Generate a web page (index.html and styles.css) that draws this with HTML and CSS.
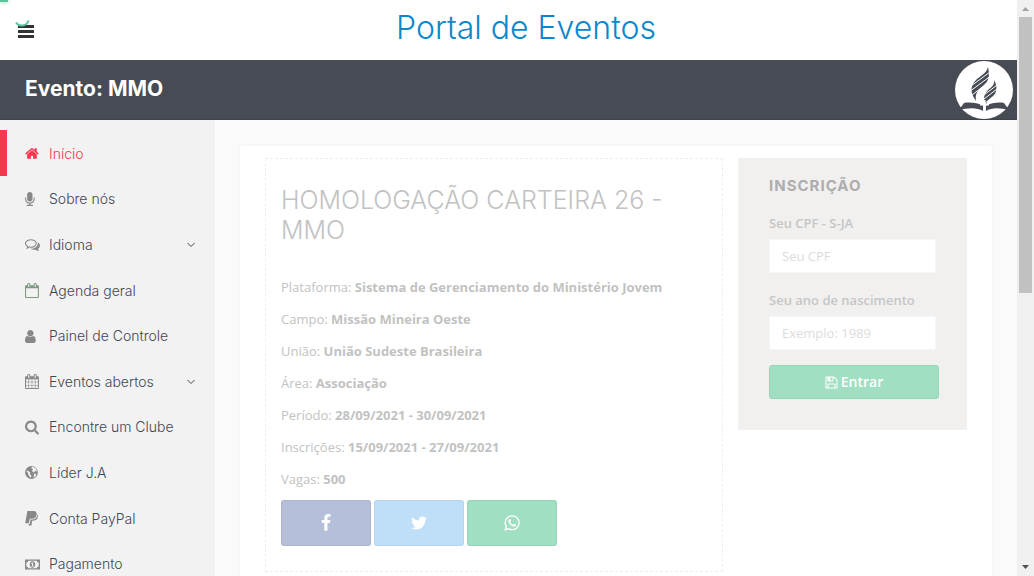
FILE: index.html
```html
<!DOCTYPE html>
<html lang="pt-BR">
<head>
<meta charset="utf-8">
<meta name="viewport" content="width=device-width, initial-scale=1">
<title>Portal de Eventos</title>
<link rel="stylesheet" href="styles.css">
</head>
<body>
<div class="window">
  <div class="page">
    <div class="progress"></div>
    <svg class="spinner" viewBox="0 0 18 18" aria-hidden="true"><path d="M2 10.500A7 7 0 0 0 14.500 8.500"/></svg>
    <header class="topbar">
      <button class="menu-toggle" type="button" aria-label="Menu">
        <svg viewBox="0 0 16 14"><path d="M0 1.500h16M0 6.500h16M0 11.500h16"/></svg>
      </button>
      <h1 class="brand"><a href="#">Portal de Eventos</a></h1>
    </header>
    <div class="event-bar">
      <h2 class="event-name">Evento: MMO</h2>
      <svg class="emblem" viewBox="0 0 58 58" role="img" aria-label="Igreja Adventista">
        <circle cx="29" cy="29" r="29" fill="#fff"/>
        <g fill="#474b54">
          <path d="M9 42C15 41 23 42 28 44.500L28 50C22 46 12 47 4 49z"/>
          <path d="M49 42C44 41 36 42 31 44.500L31 50C37 46 46 47 54 49z"/>
          <path d="M33 6C35 15 34 20 28 25 22 30 20 33 21 40 15 32 15 25 21 19 25 15 32 12 33 6z"/>
          <path d="M39 19C43 26 42 32 37 36 33 39 31 41 32 44 28 39 28 34 33 29 37 26 40 23 39 19z"/>
        </g>
        <path d="M16 25L35 11M16 29.500L35 15.500M17 34L35 20M29 34L42 24M29 38L42 28M30 42L42 33" stroke="#fff"/>
        <path d="M29.500 39V53M25 43.500H34" stroke="#fff" stroke-width="2"/>
      </svg>
    </div>
    <div class="body">
      <nav class="sidebar" aria-label="Principal">
        <ul class="menu">
          <li><a class="menu-link active" href="#"><svg class="icon" viewBox="64 0 1792 1792"><path d="M1472 992v480q0 26-19 45t-45 19h-384v-384h-256v384h-384q-26 0-45-19t-19-45v-480q0-1 .5-3t.5-3l575-474 575 474q1 2 1 6zm223-69l-62 74q-8 9-21 11h-3q-13 0-21-7l-692-577-692 577q-12 8-24 7-13-2-21-11l-62-74q-8-10-7-23.500t11-21.500l719-599q32-26 76-26t76 26l244 204v-195q0-14 9-23t23-9h192q14 0 23 9t9 23v408l219 182q10 8 11 21.500t-7 23.500z"/></svg><span>Início</span></a></li>
          <li><a class="menu-link" href="#"><svg class="icon" viewBox="320 0 1792 1792"><path d="M1472 704v128q0 221-147.500 384.500t-364.500 187.500v132h256q26 0 45 19t19 45-19 45-45 19h-640q-26 0-45-19t-19-45 19-45 45-19h256v-132q-217-24-364.500-187.500t-147.500-384.500v-128q0-26 19-45t45-19 45 19 19 45v128q0 185 131.500 316.500t316.500 131.500 316.500-131.500 131.500-316.500v-128q0-26 19-45t45-19 45 19 19 45zm-256-384v512q0 132-94 226t-226 94-226-94-94-226v-512q0-132 94-226t226-94 226 94 94 226z"/></svg><span>Sobre nós</span></a></li>
          <li><a class="menu-link" href="#"><svg class="icon" viewBox="0 0 1792 1792"><path d="M704 384q-153 0-286 52t-211.500 141-78.500 191q0 82 53 158t149 132l97 56-35 84q34-20 62-39l44-31 53 10q78 14 153 14 153 0 286-52t211.500-141 78.500-191-78.500-191-211.500-141-286-52zm0-128q191 0 353.500 68.500t256.500 186.500 94 257-94 257-256.500 186.500-353.500 68.500q-86 0-176-16-124 88-278 128-36 9-86 16h-3q-11 0-20.500-8t-11.500-21q-1-3-1-6.500t.5-6.500 2-6l2.500-5 3.500-5.500 4-5 4.500-5 4-4.500q5-6 23-25t26-29.500 22.500-29 25-38.500 20.500-44q-124-72-195-177t-71-224q0-139 94-257t256.500-186.500 353.500-68.500zm822 1169q10 24 20.500 44t25 38.500 22.500 29 26 29.500 23 25q1 1 4 4.500t4.500 5 4 5 3.500 5.500l2.500 5 2 6 .5 6.500-1 6.500q-3 14-13 22t-22 7q-50-7-86-16-154-40-278-128-90 16-176 16-271 0-472-132 58 4 88 4 161 0 309-45t264-129q125-92 192-212t67-254q0-77-23-152 129 71 204 178t75 230q0 120-71 224.500t-195 176.500z"/></svg><span>Idioma</span><svg class="chevron" viewBox="0 0 8 6"><path d="M.5 1l3.500 3.500L7.500 1"/></svg></a></li>
          <li><a class="menu-link" href="#"><svg class="icon green" viewBox="64 0 1792 1792"><path d="M192 1664h1408v-1024h-1408v1024zm384-1216v-288q0-14-9-23t-23-9h-64q-14 0-23 9t-9 23v288q0 14 9 23t23 9h64q14 0 23-9t9-23zm768 0v-288q0-14-9-23t-23-9h-64q-14 0-23 9t-9 23v288q0 14 9 23t23 9h64q14 0 23-9t9-23zm384-64v1280q0 52-38 90t-90 38h-1408q-52 0-90-38t-38-90v-1280q0-52 38-90t90-38h128v-96q0-66 47-113t113-47h64q66 0 113 47t47 113v96h384v-96q0-66 47-113t113-47h64q66 0 113 47t47 113v96h128q52 0 90 38t38 90z"/></svg><span>Agenda geral</span></a></li>
          <li><a class="menu-link" href="#"><svg class="icon" viewBox="256 0 1792 1792"><path d="M1536 1399q0 109-62.500 187t-150.500 78h-854q-88 0-150.500-78t-62.500-187q0-85 8.500-160.500t31.500-152 58.500-131 94-89 134.500-34.500q131 128 313 128t313-128q76 0 134.500 34.500t94 89 58.500 131 31.500 152 8.500 160.500zm-256-887q0 159-112.500 271.500t-271.500 112.500-271.500-112.500-112.500-271.500 112.500-271.500 271.500-112.500 271.500 112.500 112.500 271.500z"/></svg><span>Painel de Controle</span></a></li>
          <li><a class="menu-link" href="#"><svg class="icon" viewBox="64 0 1792 1792"><path d="M192 1664h288v-288h-288v288zm352 0h320v-288h-320v288zm-352-352h288v-320h-288v320zm352 0h320v-320h-320v320zm-352-384h288v-288h-288v288zm736 736h320v-288h-320v288zm-384-736h320v-288h-320v288zm768 736h288v-288h-288v288zm-384-352h320v-320h-320v320zm-352-864v-288q0-13-9.500-22.500t-22.500-9.500h-64q-13 0-22.500 9.500t-9.500 22.500v288q0 13 9.500 22.500t22.500 9.500h64q13 0 22.500-9.500t9.500-22.500zm736 864h288v-320h-288v320zm-384-384h320v-288h-320v288zm384 0h288v-288h-288v288zm32-480v-288q0-13-9.500-22.500t-22.500-9.500h-64q-13 0-22.500 9.500t-9.500 22.500v288q0 13 9.500 22.500t22.500 9.500h64q13 0 22.500-9.500t9.500-22.500zm384-64v1280q0 52-38 90t-90 38h-1408q-52 0-90-38t-38-90v-1280q0-52 38-90t90-38h128v-96q0-66 47-113t113-47h64q66 0 113 47t47 113v96h384v-96q0-66 47-113t113-47h64q66 0 113 47t47 113v96h128q52 0 90 38t38 90z"/></svg><span>Eventos abertos</span><svg class="chevron" viewBox="0 0 8 6"><path d="M.5 1l3.500 3.500L7.500 1"/></svg></a></li>
          <li><a class="menu-link" href="#"><svg class="icon" viewBox="64 64 1792 1792"><path d="M1216 832q0-185-131.500-316.500t-316.500-131.500-316.500 131.500-131.500 316.500 131.500 316.500 316.500 131.500 316.500-131.500 131.500-316.500zm512 832q0 52-38 90t-90 38q-54 0-90-38l-343-342q-179 124-399 124-143 0-273.500-55.500t-225-150-150-225-55.500-273.500 55.500-273.500 150-225 225-150 273.500-55.500 273.500 55.500 225 150 150 225 55.500 273.500q0 220-124 399l343 343q37 37 37 90z"/></svg><span>Encontre um Clube</span></a></li>
          <li><a class="menu-link" href="#"><svg class="icon" viewBox="0 0 14 14"><circle cx="6" cy="7" r="6"/><path class="cut" d="M6.500 1.500L10 3l1.200 3-1.700-.500L8 7 6.500 5.500 7.500 4 6 3zM1 5l2 .5L5 7 4.500 8.500 6 10l-.5 2L3.500 10 3 8zM8.500 8l2 .5-.5 2L8 12z"/></svg><span>Líder J.A</span></a></li>
          <li><a class="menu-link" href="#"><svg class="icon" viewBox="0 0 14 14"><path d="M2.200 0H8q3.200.2 2.900 3-.5 4-4.600 4.200H4.500L3.600 11.500H.2z"/><path d="M11.600 3.200q.8 1 .3 2.700-.8 3-4.100 3.100H6.700L6 13.500H3.300l.3-1.400h.8l.9-4.100h1.500q4-.2 4.800-4.800z"/></svg><span>Conta PayPal</span></a></li>
          <li><a class="menu-link" href="#"><svg class="icon" viewBox="0 0 15 14"><path fill-rule="evenodd" d="M0 2h15v10H0zM1.300 5v4q2 0 2 1.800h8.400q0-1.800 2-1.800V5q-2 0-2-1.800H3.300Q3.300 5 1.300 5z"/><path fill-rule="evenodd" d="M7.500 3.800q2.700.3 2.700 3.200t-2.700 3.200Q4.800 9.900 4.800 7t2.700-3.200zM6.300 5.700v.9h.7v1.700h-.7v.8h2.500v-.8h-.7V5H7.200z"/></svg><span>Pagamento</span></a></li>
        </ul>
      </nav>
      <main class="content">
        <div class="card">
          <section class="details">
            <h3 class="details-title">HOMOLOGAÇÃO CARTEIRA 26 - MMO</h3>
            <p>Plataforma: <b>Sistema de Gerenciamento do Ministério Jovem</b></p>
            <p>Campo: <b>Missão Mineira Oeste</b></p>
            <p>União: <b>União Sudeste Brasileira</b></p>
            <p>Área: <b>Associação</b></p>
            <p>Período: <b>28/09/2021 - 30/09/2021</b></p>
            <p>Inscrições: <b>15/09/2021 - 27/09/2021</b></p>
            <p>Vagas: <b>500</b></p>
            <div class="share">
              <a class="share-btn facebook" href="#" aria-label="Facebook"><svg viewBox="0 0 1792 1792"><path d="M1343 12v264h-157q-86 0-116 36t-30 108v189h293l-39 296h-254v759h-306v-759h-255v-296h255v-218q0-186 104-288.500t277-102.500q147 0 228 12z"/></svg></a>
              <a class="share-btn twitter" href="#" aria-label="Twitter"><svg viewBox="0 0 1792 1792"><path d="M1684 408q-67 98-162 167 1 14 1 42 0 130-38 259.500t-115.500 248.500-184.500 210.500-258 146-323 54.500q-271 0-496-145 35 4 78 4 225 0 401-138-105-2-188-64.500t-114-159.500q33 5 61 5 43 0 85-11-112-23-185.500-111.500t-73.500-205.500v-4q68 38 146 41-66-44-105-115t-39-154q0-88 44-163 121 149 294.500 238.500t371.500 99.500q-8-38-8-74 0-134 94.500-228.500t228.500-94.500q140 0 236 102 109-21 205-78-37 115-142 178 93-10 186-50z"/></svg></a>
              <a class="share-btn whatsapp" href="#" aria-label="WhatsApp"><svg viewBox="0 0 1792 1792"><path d="M1113 974q13 0 97.500 44t89.500 53q2 5 2 15 0 33-17 76-16 39-71 65.500t-102 26.500q-57 0-190-62-98-45-170-118t-148-185q-72-107-71-194v-8q3-91 74-158 24-22 52-22 6 0 18 1.500t19 1.500q19 0 26.500 6.500t15.500 27.500q8 20 33 88t25 75q0 21-34.500 57.500t-34.500 46.500q0 7 5 15 34 73 102 137 56 53 151 101 12 7 22 7 15 0 54-48.500t52-48.500zm-203 530q127 0 243.500-50t200.500-134 134-200.500 50-243.500-50-243.500-134-200.500-200.500-134-243.500-50-243.500 50-200.500 134-134 200.500-50 243.500q0 203 120 368l-79 233 242-77q158 104 345 104zm0-1382q153 0 292.500 60t240.500 161 161 240.500 60 292.500-60 292.500-161 240.500-240.500 161-292.500 60q-195 0-365-94l-417 134 136-405q-108-178-108-389 0-153 60-292.500t161-240.500 240.500-161 292.500-60z"/></svg></a>
            </div>
          </section>
          <form class="signup">
            <h3 class="signup-title">INSCRIÇÃO</h3>
            <label for="cpf">Seu CPF - S-JA</label>
            <input id="cpf" type="text" placeholder="Seu CPF">
            <label for="year">Seu ano de nascimento</label>
            <input id="year" type="text" placeholder="Exemplo: 1989">
            <button class="submit" type="button"><svg viewBox="64 64 1664 1664"><path d="M512 1536h768v-384h-768v384zm896 0h128v-896q0-14-10-38.500t-20-34.500l-281-281q-10-10-34-20t-39-10v416q0 40-28 68t-68 28h-576q-40 0-68-28t-28-68v-416h-128v1280h128v-416q0-40 28-68t68-28h832q40 0 68 28t28 68v416zm-384-928v-320q0-13-9.500-22.500t-22.500-9.500h-192q-13 0-22.500 9.500t-9.500 22.500v320q0 13 9.500 22.500t22.500 9.500h192q13 0 22.500-9.500t9.500-22.500zm640 32v928q0 40-28 68t-68 28h-1344q-40 0-68-28t-28-68v-1344q0-40 28-68t68-28h928q40 0 88 20t76 48l280 280q28 28 48 76t20 88z"/></svg>Entrar</button>
          </form>
        </div>
      </main>
    </div>
  </div>
  <div class="scrollbar" aria-hidden="true">
    <svg viewBox="0 0 17 17"><path d="M5 11h7L8.500 7z" fill="#a3a3a3"/></svg>
    <div class="thumb"></div>
    <svg viewBox="0 0 17 17"><path d="M5 6h7L8.500 10z" fill="#505050"/></svg>
  </div>
</div>
</body>
</html>
```
FILE: styles.css
```css
* { box-sizing: border-box; }
body, h1, h2, h3, p, ul { margin: 0; padding: 0; }
body { font-family: "Open Sans", sans-serif; font-size: 13px; background: #fafafa; }
a { color: inherit; text-decoration: none; }
svg { display: block; flex: none; fill: currentColor; }

.window { display: flex; height: 100vh; overflow: hidden; }
.page { position: relative; flex: 1; min-width: 0; display: flex; flex-direction: column; }

.progress { position: absolute; top: 0; left: 0; width: 8px; height: 2px; background: #5cc39d; box-shadow: 0 0 4px #5cc39d; }
.spinner { position: absolute; top: 12px; left: 14px; width: 18px; height: 18px; fill: none; stroke: #5cc39d; stroke-width: 2; }

.topbar { flex: none; display: flex; align-items: center; height: 60px; background: #fff; }
.menu-toggle { width: 35px; padding: 4px 0 0 18px; border: 0; background: none; }
.menu-toggle svg { width: 16px; height: 14px; fill: none; stroke: #333; stroke-width: 3; }
.brand { flex: 1; padding-bottom: 4px; text-align: center; font: 300 32px/40px Inter, sans-serif; color: #0b88cb; }

.event-bar { flex: none; display: flex; align-items: center; justify-content: space-between; height: 60px; padding: 0 4px 0 25px; background: #474b54; border-bottom: 1px solid #3e424a; }
.event-name { padding-bottom: 2px; font: 700 21px/28px Inter, sans-serif; color: #fff; }
.emblem { width: 58px; height: 58px; }

.body { flex: 1; min-height: 0; display: flex; }
.sidebar { flex: none; width: 215px; padding-top: 10px; background: #f2f2f2; }
.menu { display: grid; grid-auto-rows: 1fr; min-height: 456px; list-style: none; }
.menu-link { display: flex; align-items: center; height: 100%; padding: 2px 20px 0 18px; border-left: 7px solid transparent; font: 300 14px/20px Inter, sans-serif; color: #3f4656; }
.menu-link span { margin-left: 9px; }
.menu-link.active { border-color: #f8364f; color: #f8364f; }
.icon { width: 15px; height: 15px; color: #888; }
.active .icon { color: inherit; }
.icon.green { color: #7d9b80; }
.cut { fill: #f2f2f2; }
.chevron { width: 8px; height: 6px; margin-left: auto; fill: none; stroke: #3f4656; }

.content { flex: 1; min-width: 0; padding: 26px 25px 0; background: #fafafa; }
.card { display: grid; grid-template-columns: 2fr 1fr; gap: 15px; align-items: start; min-height: 100%; padding: 12px 25px; background: #fff; box-shadow: 0 0 4px #f3f3f3; }
.details { min-width: 0; padding: 26px 15px 25px; border: 1px dashed #eee; color: #c2c2c2; line-height: 32px; }
.details b { font-weight: 700; }
.details-title { margin-bottom: 26px; font: 300 25px/30px Inter, sans-serif; }
.share { display: flex; gap: 3px; padding-top: 5px; }
.share-btn { display: grid; place-items: center; width: 90px; height: 46px; border: 1px solid #0000000d; border-radius: 3px; color: #fff; }
.share-btn svg { width: 18px; height: 18px; }
.facebook { background: #b5bfd9; }
.twitter { background: #bfdff8; }
.whatsapp { background: #a0dfc2; }

.signup { padding: 18px 28px 31px 31px; background: #f1f0ef; color: #c6c6c6; }
.signup-title { margin-bottom: 17px; font: 700 15px/20px Inter, sans-serif; letter-spacing: 1px; color: #adadad; }
.signup label { display: block; margin-bottom: 6px; font-weight: 600; line-height: 20px; }
.signup input { display: block; width: calc(100% - 3px); height: 34px; margin-bottom: 17px; padding: 0 12px; border: 1px solid #f7f7f7; background: #fff; font: inherit; color: #999; }
.signup #year { margin-bottom: 15px; }
.signup input::placeholder { color: #dcdcdc; opacity: 1; }
.signup .submit { display: flex; align-items: center; justify-content: center; gap: 3px; width: 100%; height: 34px; border: 1px solid #94d6b7; border-radius: 3px; background: #a0dfc2; font: 600 14px/20px "Open Sans", sans-serif; color: #fff; }
.submit svg { width: 13px; height: 13px; }

.scrollbar { flex: none; display: flex; flex-direction: column; width: 17px; background: #f0f0f0; }
.scrollbar svg { width: 17px; height: 17px; }
.scrollbar svg:last-child { margin-top: auto; }
.thumb { height: 48%; margin: 0 2px; background: #c1c1c1; }
```
